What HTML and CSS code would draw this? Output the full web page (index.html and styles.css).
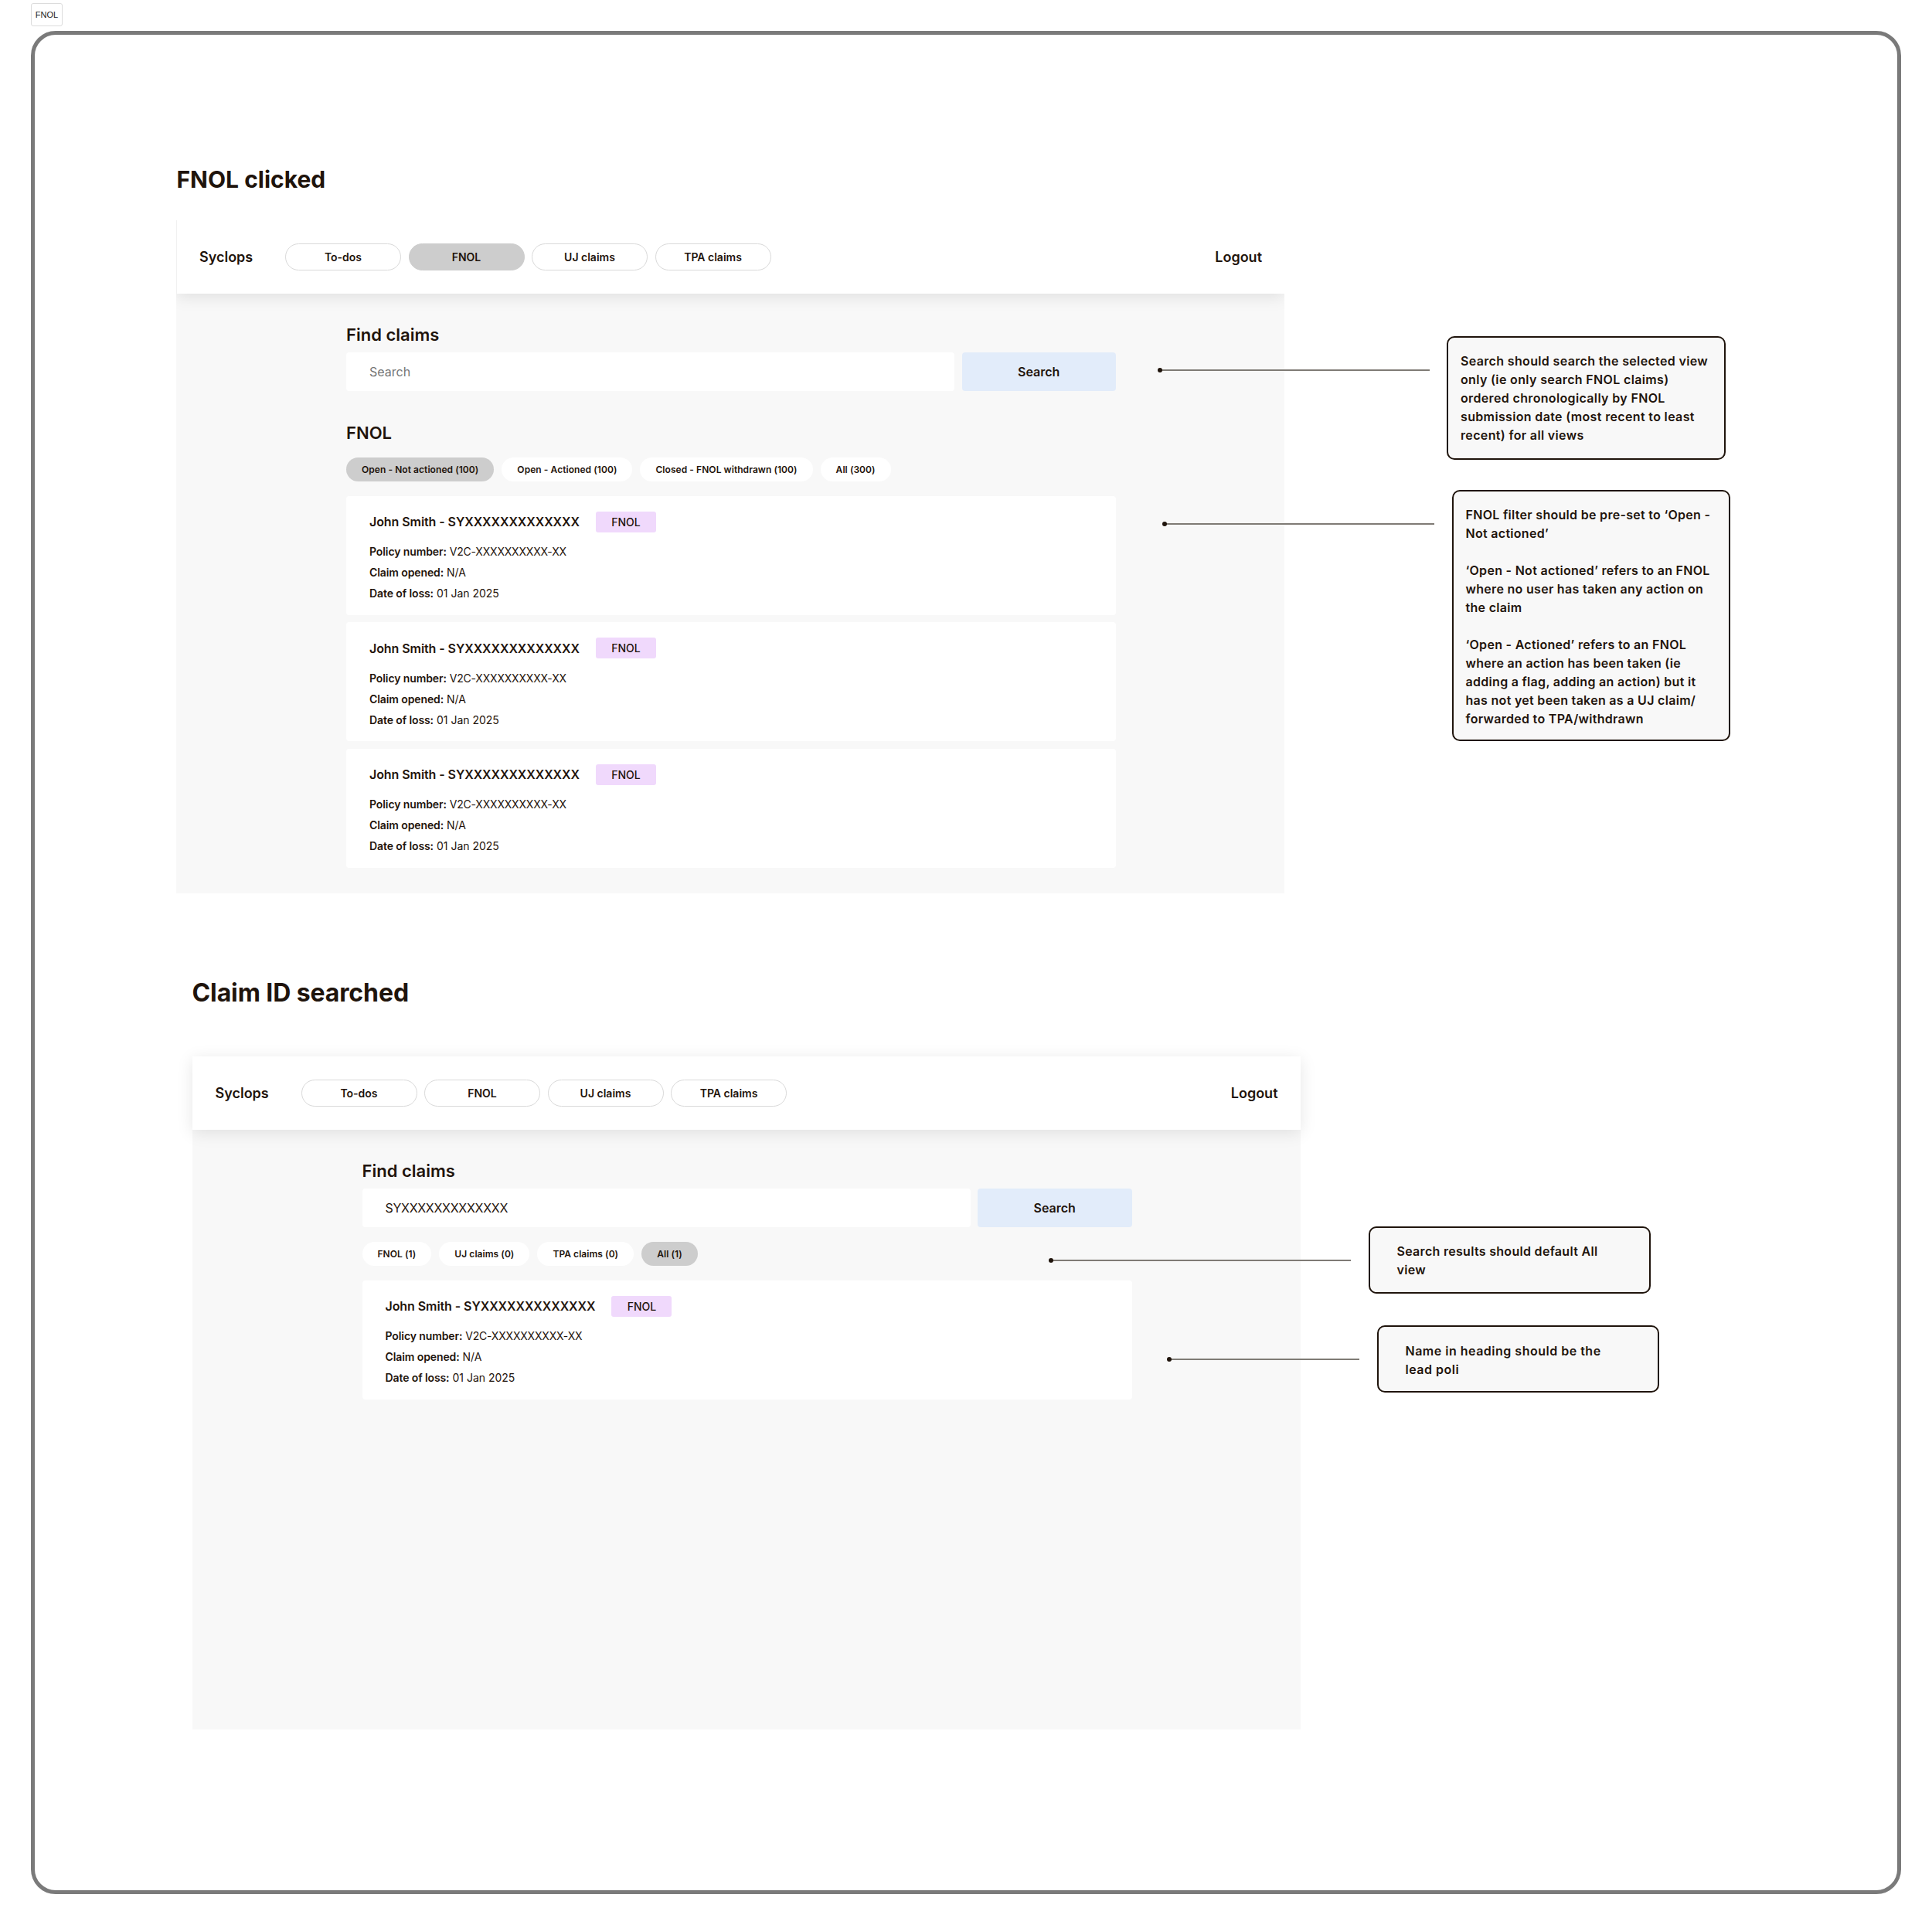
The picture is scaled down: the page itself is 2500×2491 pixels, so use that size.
FILE: index.html
```html
<!DOCTYPE html>
<html lang="en">
<head>
<meta charset="utf-8">
<title>FNOL</title>
<link rel="stylesheet" href="styles.css">
</head>
<body>
<div class="frame-tag">FNOL</div>
<main class="frame">
  <h1 class="board-title board-title-a">FNOL clicked</h1>
  <section class="screen screen-a">
    <header class="topbar">
      <span class="brand">Syclops</span>
      <nav class="nav">
        <span class="nav-pill">To-dos</span>
        <span class="nav-pill is-active">FNOL</span>
        <span class="nav-pill">UJ claims</span>
        <span class="nav-pill">TPA claims</span>
      </nav>
      <span class="logout">Logout</span>
    </header>
    <div class="content">
      <h2 class="section-title">Find claims</h2>
      <div class="search-row">
        <div class="search-input is-placeholder">Search</div>
        <div class="search-btn">Search</div>
      </div>
      <h2 class="section-title list-title">FNOL</h2>
      <div class="filters">
        <span class="filter is-active">Open - Not actioned (100)</span>
        <span class="filter">Open - Actioned (100)</span>
        <span class="filter">Closed - FNOL withdrawn (100)</span>
        <span class="filter">All (300)</span>
      </div>
      <div class="cards">
        <article class="card">
          <div class="card-head"><span class="card-title">John Smith - SYXXXXXXXXXXXXX</span><span class="tag">FNOL</span></div>
          <p class="detail"><b>Policy number:</b> <span class="policy-id">V2C-XXXXXXXXXX-XX</span></p>
          <p class="detail"><b>Claim opened:</b> N/A</p>
          <p class="detail"><b>Date of loss:</b> 01 Jan 2025</p>
        </article>
        <article class="card">
          <div class="card-head"><span class="card-title">John Smith - SYXXXXXXXXXXXXX</span><span class="tag">FNOL</span></div>
          <p class="detail"><b>Policy number:</b> <span class="policy-id">V2C-XXXXXXXXXX-XX</span></p>
          <p class="detail"><b>Claim opened:</b> N/A</p>
          <p class="detail"><b>Date of loss:</b> 01 Jan 2025</p>
        </article>
        <article class="card">
          <div class="card-head"><span class="card-title">John Smith - SYXXXXXXXXXXXXX</span><span class="tag">FNOL</span></div>
          <p class="detail"><b>Policy number:</b> <span class="policy-id">V2C-XXXXXXXXXX-XX</span></p>
          <p class="detail"><b>Claim opened:</b> N/A</p>
          <p class="detail"><b>Date of loss:</b> 01 Jan 2025</p>
        </article>
      </div>
    </div>
  </section>

  <div class="connector connector-1"></div>
  <aside class="note note-1">Search should search the selected view<br>only (ie only search FNOL claims)<br>ordered chronologically by FNOL<br>submission date (most recent to least<br>recent) for all views</aside>
  <div class="connector connector-2"></div>
  <aside class="note note-2">FNOL filter should be pre-set to ‘Open -<br>Not actioned’<br><br>‘Open - Not actioned’ refers to an FNOL<br>where no user has taken any action on<br>the claim<br><br>‘Open - Actioned’ refers to an FNOL<br>where an action has been taken (ie<br>adding a flag, adding an action) but it<br>has not yet been taken as a UJ claim/<br>forwarded to TPA/withdrawn</aside>

  <h1 class="board-title board-title-b">Claim ID searched</h1>
  <section class="screen screen-b">
    <header class="topbar">
      <span class="brand">Syclops</span>
      <nav class="nav">
        <span class="nav-pill">To-dos</span>
        <span class="nav-pill">FNOL</span>
        <span class="nav-pill">UJ claims</span>
        <span class="nav-pill">TPA claims</span>
      </nav>
      <span class="logout">Logout</span>
    </header>
    <div class="content">
      <h2 class="section-title">Find claims</h2>
      <div class="search-row">
        <div class="search-input is-value">SYXXXXXXXXXXXXX</div>
        <div class="search-btn">Search</div>
      </div>
      <div class="filters filters-results">
        <span class="filter">FNOL (1)</span>
        <span class="filter">UJ claims (0)</span>
        <span class="filter">TPA claims (0)</span>
        <span class="filter is-active">All (1)</span>
      </div>
      <div class="cards">
        <article class="card">
          <div class="card-head"><span class="card-title">John Smith - SYXXXXXXXXXXXXX</span><span class="tag">FNOL</span></div>
          <p class="detail"><b>Policy number:</b> <span class="policy-id">V2C-XXXXXXXXXX-XX</span></p>
          <p class="detail"><b>Claim opened:</b> N/A</p>
          <p class="detail"><b>Date of loss:</b> 01 Jan 2025</p>
        </article>
      </div>
    </div>
  </section>

  <div class="connector connector-3"></div>
  <aside class="note note-3">Search results should default All<br>view</aside>
  <div class="connector connector-4"></div>
  <aside class="note note-4">Name in heading should be the<br>lead poli</aside>
</main>
</body>
</html>
```

FILE: styles.css
```css
* { box-sizing: border-box; }

html, body { margin: 0; background: #fff; }

body {
  width: 2500px;
  height: 2491px;
  padding-top: 4px;
  font-family: Inter, "Liberation Sans", sans-serif;
  color: #1f140c;
}

.frame-tag {
  width: 41px;
  height: 30px;
  margin: 0 0 6px 40px;
  display: flex;
  align-items: center;
  justify-content: center;
  border: 1px solid #dcdcdc;
  border-radius: 3px;
  font-family: "Liberation Sans", Arial, sans-serif;
  font-size: 11px;
  color: #222;
}

.frame {
  position: relative;
  width: 2420px;
  height: 2411px;
  margin-left: 40px;
  border: 5px solid #7a7a7a;
  border-radius: 32px;
}

.board-title {
  position: absolute;
  margin: 0;
  font-weight: 700;
  white-space: nowrap;
  line-height: 40px;
  color: #1f140c;
}
.board-title-a { left: 183.5px; top: 167px; font-size: 30px; }
.board-title-b { left: 203.5px; top: 1220px; font-size: 32px; letter-spacing: -0.1px; }

.screen {
  position: absolute;
  width: 1434px;
  background: #f8f8f8;
}
.screen-a { left: 183px; top: 240px; height: 871px; overflow: hidden; }
.screen-b { left: 203.5px; top: 1322px; height: 871px; }

.topbar {
  height: 94.5px;
  display: flex;
  align-items: center;
  padding: 0 29px 0 30px;
  background: #fff;
  box-shadow: 0 4px 20px rgba(0, 0, 0, 0.1);
}
.screen-a .topbar { box-shadow: 0 4px 20px rgba(0, 0, 0, 0.1), inset 1px 0 0 #f1f1f1; }

.brand { font-size: 18px; font-weight: 600; width: 111px; }

.nav { display: flex; gap: 9.5px; }

.nav-pill {
  width: 150px;
  height: 35px;
  display: flex;
  align-items: center;
  justify-content: center;
  border: 1.5px solid #d9d9d9;
  border-radius: 18px;
  background: #fff;
  font-size: 14px;
  font-weight: 600;
}
.nav-pill.is-active { background: #cdcdcd; border-color: #cdcdcd; }

.logout { margin-left: auto; font-size: 18px; font-weight: 600; }

.content { width: 996px; margin-left: 220px; padding-top: 41px; }

.section-title {
  margin: 0 0 11px;
  font-size: 22px;
  line-height: 24px;
  font-weight: 600;
}

.search-row { display: flex; gap: 9.5px; height: 50px; }

.search-input {
  flex: 1;
  display: flex;
  align-items: center;
  padding-left: 30px;
  background: #fff;
  border-radius: 4px;
  font-size: 16px;
}
.search-input.is-placeholder { color: #757575; }
.search-input.is-value { letter-spacing: -0.3px; }

.search-btn {
  width: 199.5px;
  display: flex;
  align-items: center;
  justify-content: center;
  background: #e2ecfa;
  border-radius: 4px;
  font-size: 16px;
  font-weight: 600;
}

.list-title { margin: 42px 0 20px; }

.filters { display: flex; gap: 10px; }
.filters-results { margin-top: 19px; }

.filter {
  height: 31px;
  display: flex;
  align-items: center;
  padding: 0 20px;
  background: #fff;
  border-radius: 15.5px;
  font-size: 12px;
  font-weight: 600;
  letter-spacing: 0.06px;
  white-space: nowrap;
}
.filter.is-active { background: #cdcdcd; }

.cards {
  display: flex;
  flex-direction: column;
  gap: 9.5px;
  margin-top: 19px;
}

.card {
  height: 154px;
  padding: 20px 30px 0;
  background: #fff;
  border-radius: 4px;
}

.card-head {
  display: flex;
  align-items: center;
  gap: 21px;
  height: 27px;
  margin-bottom: 11.5px;
}

.card-title { font-size: 16px; font-weight: 600; white-space: nowrap; letter-spacing: -0.08px; }

.tag {
  width: 78px;
  height: 27px;
  display: flex;
  align-items: center;
  justify-content: center;
  background: #f0d9fc;
  border-radius: 3px;
  font-size: 14px;
  font-weight: 500;
}

.detail {
  margin: 0;
  font-size: 14px;
  line-height: 27px;
  white-space: nowrap;
}
.detail b { font-weight: 600; letter-spacing: -0.1px; }
.policy-id { letter-spacing: -0.2px; }

.connector {
  position: absolute;
  height: 2px;
  background: #7f7b75;
}
.connector::before {
  content: "";
  position: absolute;
  left: -3px;
  top: -2px;
  width: 6px;
  height: 6px;
  border-radius: 50%;
  background: #1f140c;
}
.connector-1 { left: 1456px; top: 433px; width: 349px; }
.connector-2 { left: 1462px; top: 632px; width: 349px; }
.connector-3 { left: 1314.5px; top: 1585px; width: 388px; }
.connector-4 { left: 1468px; top: 1713px; width: 246px; }

.note {
  position: absolute;
  background: #f8f8f8;
  border: 2px solid #1f140c;
  border-radius: 10px;
  font-size: 16px;
  font-weight: 600;
  line-height: 24px;
  white-space: nowrap;
  letter-spacing: 0.3px;
}
.note-1 { left: 1827px; top: 390px; width: 361px; height: 160px; padding: 18px 0 0 16px; letter-spacing: 0.35px; }
.note-2 { left: 1834px; top: 589px; width: 360px; height: 325px; padding: 17.5px 0 0 15.5px; }
.note-3 { left: 1725.5px; top: 1542px; width: 365px; height: 87px; padding: 18px 0 0 35px; }
.note-4 { left: 1736.5px; top: 1670px; width: 365px; height: 87px; padding: 19px 0 0 35px; letter-spacing: 0.5px; }
```
